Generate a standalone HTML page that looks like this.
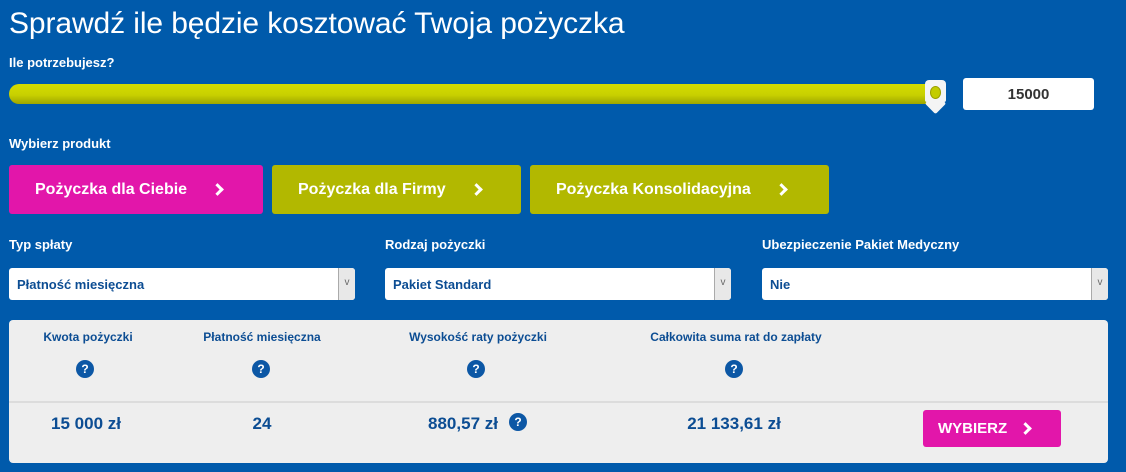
<!DOCTYPE html><html><head><meta charset="utf-8"><style>
*{margin:0;padding:0;box-sizing:border-box}
body{width:1126px;height:472px;background:#005aab;font-family:"Liberation Sans",sans-serif;position:relative;overflow:hidden;color:#fff}
.a{position:absolute}
h1{position:absolute;left:9px;top:7px;font-size:30px;font-weight:normal;letter-spacing:-0.1px}
.lb{font-size:13px;font-weight:bold}
.btn{position:absolute;top:165px;height:49px;border-radius:3px;font-size:16px;font-weight:bold;display:flex;align-items:center}
.chev{display:inline-block;width:9px;height:9px;border-right:3px solid #fff;border-top:3px solid #fff;transform:rotate(45deg);margin-left:26px}
.sel{position:absolute;top:268px;height:32px;background:#fff;border-radius:3px;color:#0c4d93;font-size:13px;font-weight:bold;padding:9px 8px}
.sel i{position:absolute;right:0;top:0;width:17px;height:32px;background:#e8e8e8;border-left:1px solid #aaa;border-radius:0 3px 3px 0;font-style:normal;color:#666;font-size:10px;text-align:center;line-height:30px;font-weight:normal}
.panel{position:absolute;left:9px;top:320px;width:1099px;height:143px;background:#eeeeee;border-radius:4px}
.h{position:absolute;top:10px;color:#0c4d93;font-size:12px;font-weight:bold;transform:translateX(-50%);white-space:nowrap}
.q{position:absolute;width:18px;height:18px;border-radius:50%;background:#0c57a5;color:#fff;font-size:12px;font-weight:bold;text-align:center;line-height:18px}
.v{position:absolute;top:94px;color:#0c4d93;font-size:17px;font-weight:bold;transform:translateX(-50%);white-space:nowrap}
</style></head><body>
<h1>Sprawdź ile będzie kosztować Twoja pożyczka</h1>
<div class="a lb" style="left:9px;top:55px">Ile potrzebujesz?</div>
<div class="a" style="left:9px;top:84px;width:930px;height:20px;border-radius:10px;background:linear-gradient(#d4dc00,#c8d000 55%,#9ea600)"></div>
<div class="a" style="left:925px;top:80px;width:21px;height:22px;background:#f4f4f4;border-radius:4px 4px 2px 2px"></div>
<div class="a" style="left:928px;top:96px;width:15px;height:15px;background:#f4f4f4;transform:rotate(45deg);border-radius:2px"></div>
<div class="a" style="left:930px;top:86px;width:11px;height:13px;border-radius:50%;background:#c3cc00;border:1px solid #9a9f00"></div>
<div class="a" style="left:963px;top:78px;width:131px;height:32px;background:#fff;border-radius:3px;color:#333;font-size:15px;font-weight:bold;text-align:center;line-height:34px">15000</div>
<div class="a lb" style="left:9px;top:136px">Wybierz produkt</div>
<div class="btn" style="left:9px;width:254px;background:#e216aa;padding-left:26px">Pożyczka dla Ciebie<span class="chev"></span></div>
<div class="btn" style="left:272px;width:249px;background:#b2b800;padding-left:26px">Pożyczka dla Firmy<span class="chev"></span></div>
<div class="btn" style="left:530px;width:299px;background:#b2b800;padding-left:26px">Pożyczka Konsolidacyjna<span class="chev"></span></div>
<div class="a lb" style="left:9px;top:237px">Typ spłaty</div>
<div class="a lb" style="left:385px;top:237px">Rodzaj pożyczki</div>
<div class="a lb" style="left:762px;top:237px">Ubezpieczenie Pakiet Medyczny</div>
<div class="sel" style="left:9px;width:346px">Płatność miesięczna<i>v</i></div>
<div class="sel" style="left:385px;width:346px">Pakiet Standard<i>v</i></div>
<div class="sel" style="left:762px;width:346px">Nie<i>v</i></div>
<div class="panel">
<div class="h" style="left:79px">Kwota pożyczki</div>
<div class="h" style="left:253px">Płatność miesięczna</div>
<div class="h" style="left:469px">Wysokość raty pożyczki</div>
<div class="h" style="left:727px">Całkowita suma rat do zapłaty</div>
<div class="q" style="left:67px;top:40px">?</div>
<div class="q" style="left:243px;top:40px">?</div>
<div class="q" style="left:458px;top:40px">?</div>
<div class="q" style="left:716px;top:40px">?</div>
<div class="a" style="left:0;top:81px;width:1099px;height:2px;background:#dcdcdc"></div>
<div class="v" style="left:77px">15 000 zł</div>
<div class="v" style="left:253px">24</div>
<div class="v" style="left:454px">880,57 zł</div>
<div class="q" style="left:500px;top:93px">?</div>
<div class="v" style="left:725px">21 133,61 zł</div>
<div class="a" style="left:914px;top:90px;width:138px;height:37px;background:#e216aa;border-radius:3px;font-size:15px;font-weight:bold;display:flex;align-items:center;padding-left:15px">WYBIERZ<span class="chev" style="margin-left:14px"></span></div>
</div>
</body></html>
